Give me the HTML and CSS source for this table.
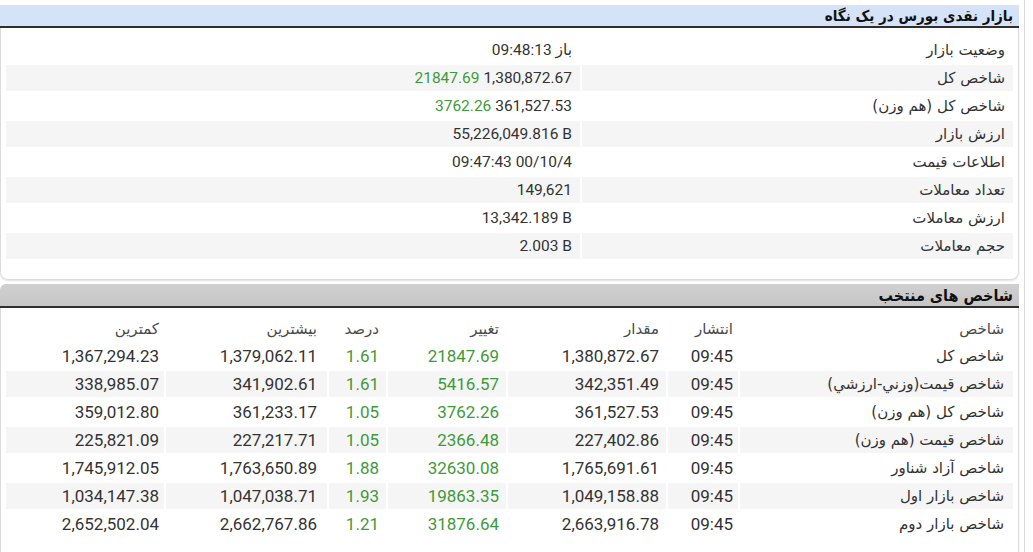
FILE: index.html
```html
<!DOCTYPE html>
<html lang="fa">
<head>
<meta charset="utf-8">
<title>بازار نقدی بورس در یک نگاه</title>
<link rel="stylesheet" href="styles.css">
</head>
<body>
<div class="frame">
  <main class="main">
    <h2 class="sec-head blue">بازار نقدی بورس در یک نگاه</h2>
    <div class="box box-top">
      <table class="kv">
        <colgroup><col class="c-label"><col></colgroup>
        <tr><td>وضعیت بازار</td><td><span>باز</span> <span class="ltr">09:48:13</span></td></tr>
        <tr><td>شاخص کل</td><td><span class="ltr">1,380,872.67</span> <span class="up ltr">21847.69</span></td></tr>
        <tr><td>شاخص کل (هم وزن)</td><td><span class="ltr">361,527.53</span> <span class="up ltr">3762.26</span></td></tr>
        <tr><td>ارزش بازار</td><td><span class="ltr">55,226,049.816 B</span></td></tr>
        <tr><td>اطلاعات قیمت</td><td><span class="ltr">09:47:43 00/10/4</span></td></tr>
        <tr><td>تعداد معاملات</td><td><span class="ltr">149,621</span></td></tr>
        <tr><td>ارزش معاملات</td><td><span class="ltr">13,342.189 B</span></td></tr>
        <tr><td>حجم معاملات</td><td><span class="ltr">2.003 B</span></td></tr>
      </table>
    </div>
    <h2 class="sec-head gray">شاخص های منتخب</h2>
    <div class="box box-bottom">
      <table class="grid">
        <colgroup>
          <col class="w-name"><col class="w-time"><col class="w-val"><col class="w-chg"><col class="w-pct"><col class="w-max"><col class="w-min">
        </colgroup>
        <thead>
          <tr><th class="p9">شاخص</th><th class="p5">انتشار</th><th>مقدار</th><th>تغییر</th><th>درصد</th><th class="p10">بیشترین</th><th class="p5">کمترین</th></tr>
        </thead>
        <tbody>
          <tr><td class="p9">شاخص کل</td><td class="p5">09:45</td><td>1,380,872.67</td><td class="up">21847.69</td><td class="up">1.61</td><td class="p10">1,379,062.11</td><td class="p5">1,367,294.23</td></tr>
          <tr><td class="p9">شاخص قیمت(وزني-ارزشي)</td><td class="p5">09:45</td><td>342,351.49</td><td class="up">5416.57</td><td class="up">1.61</td><td class="p10">341,902.61</td><td class="p5">338,985.07</td></tr>
          <tr><td class="p9">شاخص کل (هم وزن)</td><td class="p5">09:45</td><td>361,527.53</td><td class="up">3762.26</td><td class="up">1.05</td><td class="p10">361,233.17</td><td class="p5">359,012.80</td></tr>
          <tr><td class="p9">شاخص قیمت (هم وزن)</td><td class="p5">09:45</td><td>227,402.86</td><td class="up">2366.48</td><td class="up">1.05</td><td class="p10">227,217.71</td><td class="p5">225,821.09</td></tr>
          <tr><td class="p9">شاخص آزاد شناور</td><td class="p5">09:45</td><td>1,765,691.61</td><td class="up">32630.08</td><td class="up">1.88</td><td class="p10">1,763,650.89</td><td class="p5">1,745,912.05</td></tr>
          <tr><td class="p9">شاخص بازار اول</td><td class="p5">09:45</td><td>1,049,158.88</td><td class="up">19863.35</td><td class="up">1.93</td><td class="p10">1,047,038.71</td><td class="p5">1,034,147.38</td></tr>
          <tr><td class="p9">شاخص بازار دوم</td><td class="p5">09:45</td><td>2,663,916.78</td><td class="up">31876.64</td><td class="up">1.21</td><td class="p10">2,662,767.86</td><td class="p5">2,652,502.04</td></tr>
        </tbody>
      </table>
    </div>
  </main>
  <div class="rail"></div>
</div>
</body>
</html>
```
FILE: styles.css
```css
html, body {
  margin: 0;
  padding: 0;
  background: #ffffff;
}
body {
  font-family: Roboto, "DejaVu Sans", sans-serif;
  color: #333333;
  font-size: 16px;
}
.frame {
  display: flex;
  height: 552px;
  overflow: hidden;
}
.main {
  width: 1019px;
  direction: rtl;
  flex: none;
}
.rail {
  width: 1px;
  margin-left: 5px;
  background: #dcdcdc;
  height: 552px;
}
.sec-head {
  margin: 0;
  height: 21px;
  line-height: 22px;
  padding-right: 6px;
  font-family: "DejaVu Sans Condensed", "DejaVu Sans", sans-serif;
  font-stretch: condensed;
  font-weight: bold;
  font-size: 16px;
  color: #111111;
  border-bottom: 2px solid #2f2f2f;
}
.sec-head.blue {
  margin-top: 5px;
  font-size: 15px;
  background: #d5e3f8;
}
.sec-head.gray {
  margin-top: 4px;
  height: 22px;
  line-height: 24px;
  background: linear-gradient(#d0d0d0, #c6c6c6);
  border-radius: 6px 0 0 0;
}
.box {
  border: 1px solid #dcdcdc;
  border-top: none;
  border-radius: 0 0 8px 8px;
  padding: 7px 3px 18px 3px;
  box-shadow: 0 1px 2px rgba(0,0,0,0.12);
}
.box-bottom {
  padding-top: 6px;
  height: 300px;
}
table {
  width: 100%;
  border-collapse: separate;
  border-spacing: 2px;
  table-layout: fixed;
}
td, th {
  height: 26px;
  padding: 0 7px 0 0;
  text-align: right;
  white-space: nowrap;
  font-weight: normal;
  vertical-align: middle;
}
th {
  height: 25px;
}
.grid td {
  font-size: 17px;
}
td:first-child, th:first-child {
  font-family: "DejaVu Sans", sans-serif;
  font-size: 15px;
}
th {
  font-family: "DejaVu Sans", sans-serif;
  font-size: 15px;
  color: #4a4a4a;
}
.kv tr:nth-child(even) td,
.grid tbody tr:nth-child(even) td {
  background: #f5f5f5;
}
.kv td:first-child { padding-right: 8px; }
.kv td:last-child { padding-right: 8px; font-size: 15.5px; }
.c-label { width: 431px; }
.w-name { width: 273px; }
.w-time { width: 70px; }
.w-val { width: 158px; }
.w-chg { width: 118px; }
.w-pct { width: 57px; }
.w-max { width: 161px; }
.w-min { width: 158px; }
.p5 { padding-right: 5px; }
.p9 { padding-right: 9px; }
.p10 { padding-right: 10px; }
.ltr { unicode-bidi: isolate; direction: ltr; }
.up { color: #3f9a3a; }
```
